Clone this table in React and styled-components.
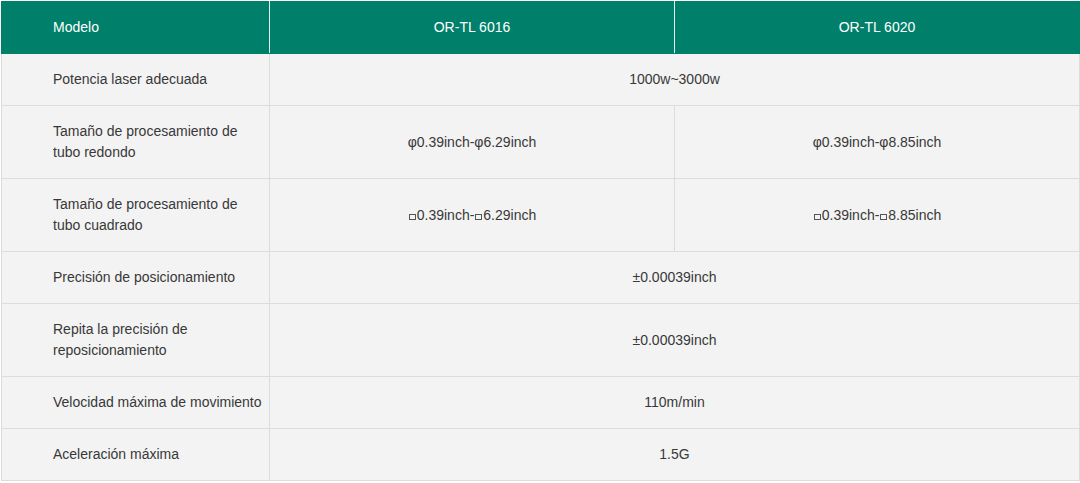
import React from 'react'
import styled, { createGlobalStyle } from 'styled-components'

const Verde = '#00806a';
const Borde = '#dcdcdc';

const Global = createGlobalStyle`
body{
margin:0;
background:#fff;
font-family:'Liberation Sans', Arial, sans-serif;
}
`
const Contenedor = styled.div`
width:1080px;
padding:1px 0 0 1px;
box-sizing:border-box;
`
const Tabla = styled.table`
width:1078px;
border-collapse:collapse;
table-layout:fixed;
font-size:14px;
line-height:21px;
color:#383838;
`
const Cabecera = styled.th`
background:${Verde};
color:#fff;
font-weight:normal;
height:21px;
padding:15px 0 15px ${p => p.$izq ? '51px' : '0'};
text-align:${p => p.$izq ? 'left' : 'center'};
border:1px solid ${Verde};
border-right:1px solid #e6f2ef;
&:last-child{
border-right:1px solid ${Verde};
}
`
const Celda = styled.td`
background:#f3f3f3;
padding:15px 0 15px ${p => p.$izq ? '51px' : '0'};
text-align:${p => p.$izq ? 'left' : 'center'};
border:1px solid ${Borde};
vertical-align:middle;
`
const Texto = styled.span`
display:inline-block;
max-width:${p => p.$ancho || 'none'};
`
const Cuadro = styled.span`
display:inline-block;
width:5px;
height:4px;
border:1px solid #555;
margin:0 1px 0 1px;
vertical-align:baseline;
`

const cuadrado = (v) => <><Cuadro />{v}</>

const filas = [
  ['Potencia laser adecuada', '1000w~3000w'],
  ['Tamaño de procesamiento de tubo redondo', 'φ0.39inch-φ6.29inch', 'φ0.39inch-φ8.85inch'],
  ['Tamaño de procesamiento de tubo cuadrado',
    <>{cuadrado('0.39inch-')}{cuadrado('6.29inch')}</>,
    <>{cuadrado('0.39inch-')}{cuadrado('8.85inch')}</>],
  ['Precisión de posicionamiento', '±0.00039inch'],
  ['Repita la precisión de reposicionamiento', '±0.00039inch'],
  ['Velocidad máxima de movimiento', '110m/min'],
  ['Aceleración máxima', '1.5G'],
]

export default function App() {
  return (
    <Contenedor>
      <Global />
      <Tabla>
        <colgroup>
          <col style={{ width: '268px' }} />
          <col style={{ width: '405px' }} />
          <col style={{ width: '405px' }} />
        </colgroup>
        <thead>
          <tr>
            <Cabecera $izq>Modelo</Cabecera>
            <Cabecera>OR-TL 6016</Cabecera>
            <Cabecera>OR-TL 6020</Cabecera>
          </tr>
        </thead>
        <tbody>
          {filas.map(([nombre, a, b]) => (
            <tr key={nombre}>
              <Celda $izq><Texto $ancho="212px">{nombre}</Texto></Celda>
              {b ? (
                <>
                  <Celda>{a}</Celda>
                  <Celda>{b}</Celda>
                </>
              ) : (
                <Celda colSpan={2}>{a}</Celda>
              )}
            </tr>
          ))}
        </tbody>
      </Tabla>
    </Contenedor>
  )
}
